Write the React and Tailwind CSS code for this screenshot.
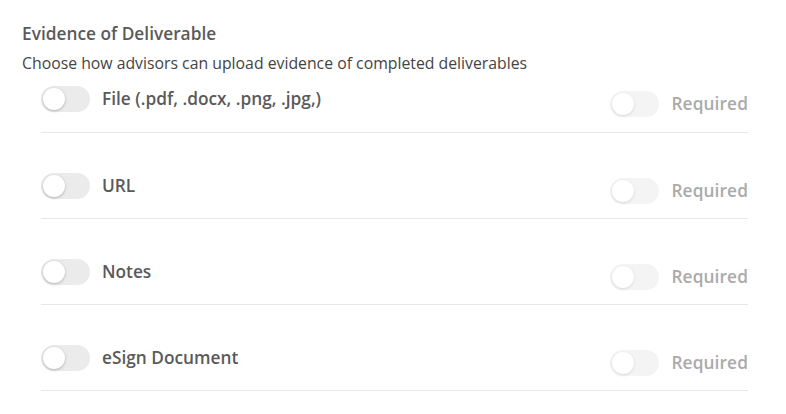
import React, { useState } from 'react';

const options = [
  { id: 'file', label: 'File (.pdf, .docx, .png, .jpg,)' },
  { id: 'url', label: 'URL' },
  { id: 'notes', label: 'Notes' },
  { id: 'esign', label: 'eSign Document' },
];

const Toggle = ({ on, onChange, disabled }) => (
  <button
    type="button"
    onClick={() => !disabled && onChange(!on)}
    className={`relative w-[49px] h-[26px] rounded-full shrink-0 ${on ? 'bg-[#4a90e2]' : 'bg-[#ebebeb]'} ${disabled ? 'opacity-50' : ''}`}
  >
    <span
      className={`absolute top-[2px] w-[22px] h-[22px] rounded-full bg-white shadow-[0_1px_3px_rgba(0,0,0,0.25)] ${on ? 'left-[25px]' : 'left-[2px]'}`}
    />
  </button>
);

const App = () => {
  const [state, setState] = useState({});

  return (
    <div className="min-h-screen bg-white font-['Open_Sans',sans-serif] pl-[22px] pt-[22px]">
      <h2 className="text-[17.3px] font-semibold text-[#5a5a5a] leading-[24px]">Evidence of Deliverable</h2>
      <p className="text-[15.8px] text-[#444] leading-[22px] mt-[6px]">
        Choose how advisors can upload evidence of completed deliverables
      </p>

      <div className="ml-[19px] w-[707px] mt-[12px]">
        {options.map((opt, i) => (
          <div
            key={opt.id}
            className={`flex justify-between border-b border-[#e8e8e8] ${i === 0 ? 'h-[47px] pb-[18px]' : 'h-[86px] pt-[40px] pb-[18px]'}`}
          >
            <div className="flex items-start gap-[12px]">
              <Toggle
                on={!!state[opt.id]}
                onChange={(v) => setState({ ...state, [opt.id]: v })}
              />
              <span className="text-[17.3px] font-semibold text-[#5a5a5a] leading-[26px]">{opt.label}</span>
            </div>
            <div className="flex items-start gap-[12px] pt-[5px]">
              <Toggle on={false} disabled />
              <span className="text-[17.3px] font-semibold text-[#aaa] leading-[26px] tracking-[0.1px]">Required</span>
            </div>
          </div>
        ))}
      </div>
    </div>
  );
};

export default App;
